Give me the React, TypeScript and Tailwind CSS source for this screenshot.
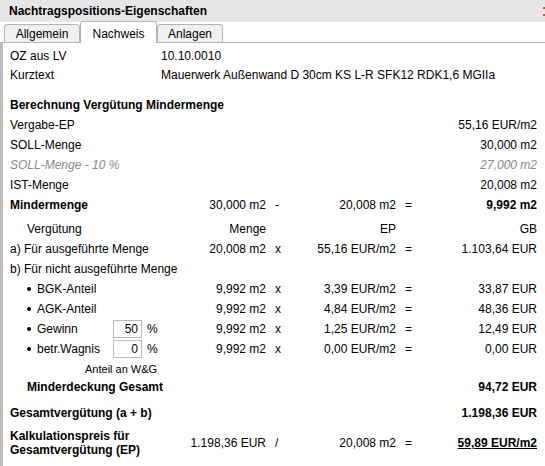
import React from "react";

type RowProps = {
  label?: React.ReactNode;
  menge?: React.ReactNode;
  op?: string;
  ep?: React.ReactNode;
  eq?: string;
  gb?: React.ReactNode;
  className?: string;
};

function Row({ label, menge, op, ep, eq, gb, className }: RowProps) {
  return (
    <div className={"flex items-center h-[20px] " + (className ?? "")}>
      <div className="w-[180px] flex items-center whitespace-nowrap">{label}</div>
      <div className="w-[76px] text-right whitespace-nowrap">{menge}</div>
      <div className="w-[20px] pl-[9px]">{op}</div>
      <div className="w-[110px] text-right whitespace-nowrap">{ep}</div>
      <div className="w-[24px] pl-[9px]">{eq}</div>
      <div className="w-[117px] text-right whitespace-nowrap">{gb}</div>
    </div>
  );
}

function Bullet({ children }: { children: React.ReactNode }) {
  return (
    <div className="flex items-center pl-[17px]">
      <span className="w-[4px] h-[4px] rounded-full bg-black mr-[6px]"></span>
      <span>{children}</span>
    </div>
  );
}

function PctInput({ label, value }: { label: string; value: string }) {
  return (
    <div className="flex items-center pl-[17px]">
      <span className="w-[4px] h-[4px] rounded-full bg-black mr-[6px]"></span>
      <span className="w-[76px]">{label}</span>
      <span className="w-[29px] h-[18px] border border-[#b9b9b9] text-right pr-[3px] leading-[16px]">
        {value}
      </span>
      <span className="ml-[5px]">%</span>
    </div>
  );
}

export default function App() {
  return (
    <div
      className="w-[545px] h-[466px] bg-white text-black text-[12px] overflow-hidden relative"
      style={{ fontFamily: '"Liberation Sans", Arial, sans-serif' }}
    >
      {/* Title bar */}
      <div className="h-[22px] bg-[#e6e6e6] flex items-center pl-[9px] font-bold relative">
        Nachtragspositions-Eigenschaften
        <span className="absolute right-0 top-[7px] w-[2px] h-[2px] bg-[#c86400]"></span>
        <span className="absolute right-0 top-[14px] w-[2px] h-[2px] bg-[#c86400]"></span>
      </div>

      {/* Tabs */}
      <div className="h-[21px] flex items-end pl-[4px] border-b border-[#b4b4b4] relative">
        <div className="w-[76px] h-[19px] mb-[-1px] bg-[#f0f0f0] border border-[#b4b4b4] rounded-t-[3px] flex items-center justify-center">
          Allgemein
        </div>
        <div className="w-[77px] h-[22px] mb-[-1px] bg-white border border-b-0 border-[#b4b4b4] rounded-t-[3px] flex items-center justify-center pt-[2px]">
          Nachweis
        </div>
        <div className="w-[66px] h-[19px] mb-[-1px] bg-[#f0f0f0] border border-[#b4b4b4] rounded-t-[3px] flex items-center justify-center">
          Anlagen
        </div>
      </div>

      {/* Content */}
      <div className="border-l-[3px] border-[#bdbdbd] pl-[7px] pt-[3px] h-[424px]">
        <div className="flex items-center h-[19px]">
          <div className="w-[151px]">OZ aus LV</div>
          <div>10.10.0010</div>
        </div>
        <div className="flex items-center h-[19px]">
          <div className="w-[151px]">Kurztext</div>
          <div className="whitespace-nowrap">Mauerwerk Außenwand D 30cm KS L-R SFK12 RDK1,6 MGIIa</div>
        </div>

        <div className="flex items-center h-[20px] mt-[11px] font-bold">
          Berechnung Vergütung Mindermenge
        </div>
        <Row label="Vergabe-EP" gb="55,16 EUR/m2" />
        <Row label="SOLL-Menge" gb="30,000 m2" />
        <Row className="italic text-[#8a8a8a]" label="SOLL-Menge - 10 %" gb="27,000 m2" />
        <Row label="IST-Menge" gb="20,008 m2" />
        <Row
          label={<span className="font-bold">Mindermenge</span>}
          menge="30,000 m2"
          op="-"
          ep="20,008 m2"
          eq="="
          gb={<span className="font-bold">9,992 m2</span>}
        />

        <Row className="mt-[4px]" label={<span className="pl-[17px]">Vergütung</span>} menge="Menge" ep="EP" gb="GB" />
        <Row
          label="a) Für ausgeführte Menge"
          menge="20,008 m2"
          op="x"
          ep="55,16 EUR/m2"
          eq="="
          gb="1.103,64 EUR"
        />
        <Row label="b) Für nicht ausgeführte Menge" />
        <Row
          label={<Bullet>BGK-Anteil</Bullet>}
          menge="9,992 m2"
          op="x"
          ep="3,39 EUR/m2"
          eq="="
          gb="33,87 EUR"
        />
        <Row
          label={<Bullet>AGK-Anteil</Bullet>}
          menge="9,992 m2"
          op="x"
          ep="4,84 EUR/m2"
          eq="="
          gb="48,36 EUR"
        />
        <Row
          label={<PctInput label="Gewinn" value="50" />}
          menge="9,992 m2"
          op="x"
          ep="1,25 EUR/m2"
          eq="="
          gb="12,49 EUR"
        />
        <Row
          label={<PctInput label="betr.Wagnis" value="0" />}
          menge="9,992 m2"
          op="x"
          ep="0,00 EUR/m2"
          eq="="
          gb="0,00 EUR"
        />
        <div className="h-[17px] flex items-end text-[11px] pl-[75px] mt-[1px]">Anteil an W&amp;G</div>
        <Row
          className="h-[19px]"
          label={<span className="pl-[17px] font-bold">Minderdeckung Gesamt</span>}
          gb={<span className="font-bold">94,72 EUR</span>}
        />

        <Row
          className="mt-[6px]"
          label={<span className="font-bold">Gesamtvergütung (a + b)</span>}
          gb={<span className="font-bold">1.198,36 EUR</span>}
        />

        <div className="flex items-center h-[28px] mt-[6px]">
          <div className="w-[180px] font-bold leading-[14px]">
            Kalkulationspreis für
            <br />
            Gesamtvergütung (EP)
          </div>
          <div className="w-[76px] text-right whitespace-nowrap">1.198,36 EUR</div>
          <div className="w-[20px] pl-[9px]">/</div>
          <div className="w-[110px] text-right whitespace-nowrap">20,008 m2</div>
          <div className="w-[24px] pl-[9px]">=</div>
          <div className="w-[117px] text-right whitespace-nowrap font-bold underline">59,89 EUR/m2</div>
        </div>
      </div>
    </div>
  );
}
